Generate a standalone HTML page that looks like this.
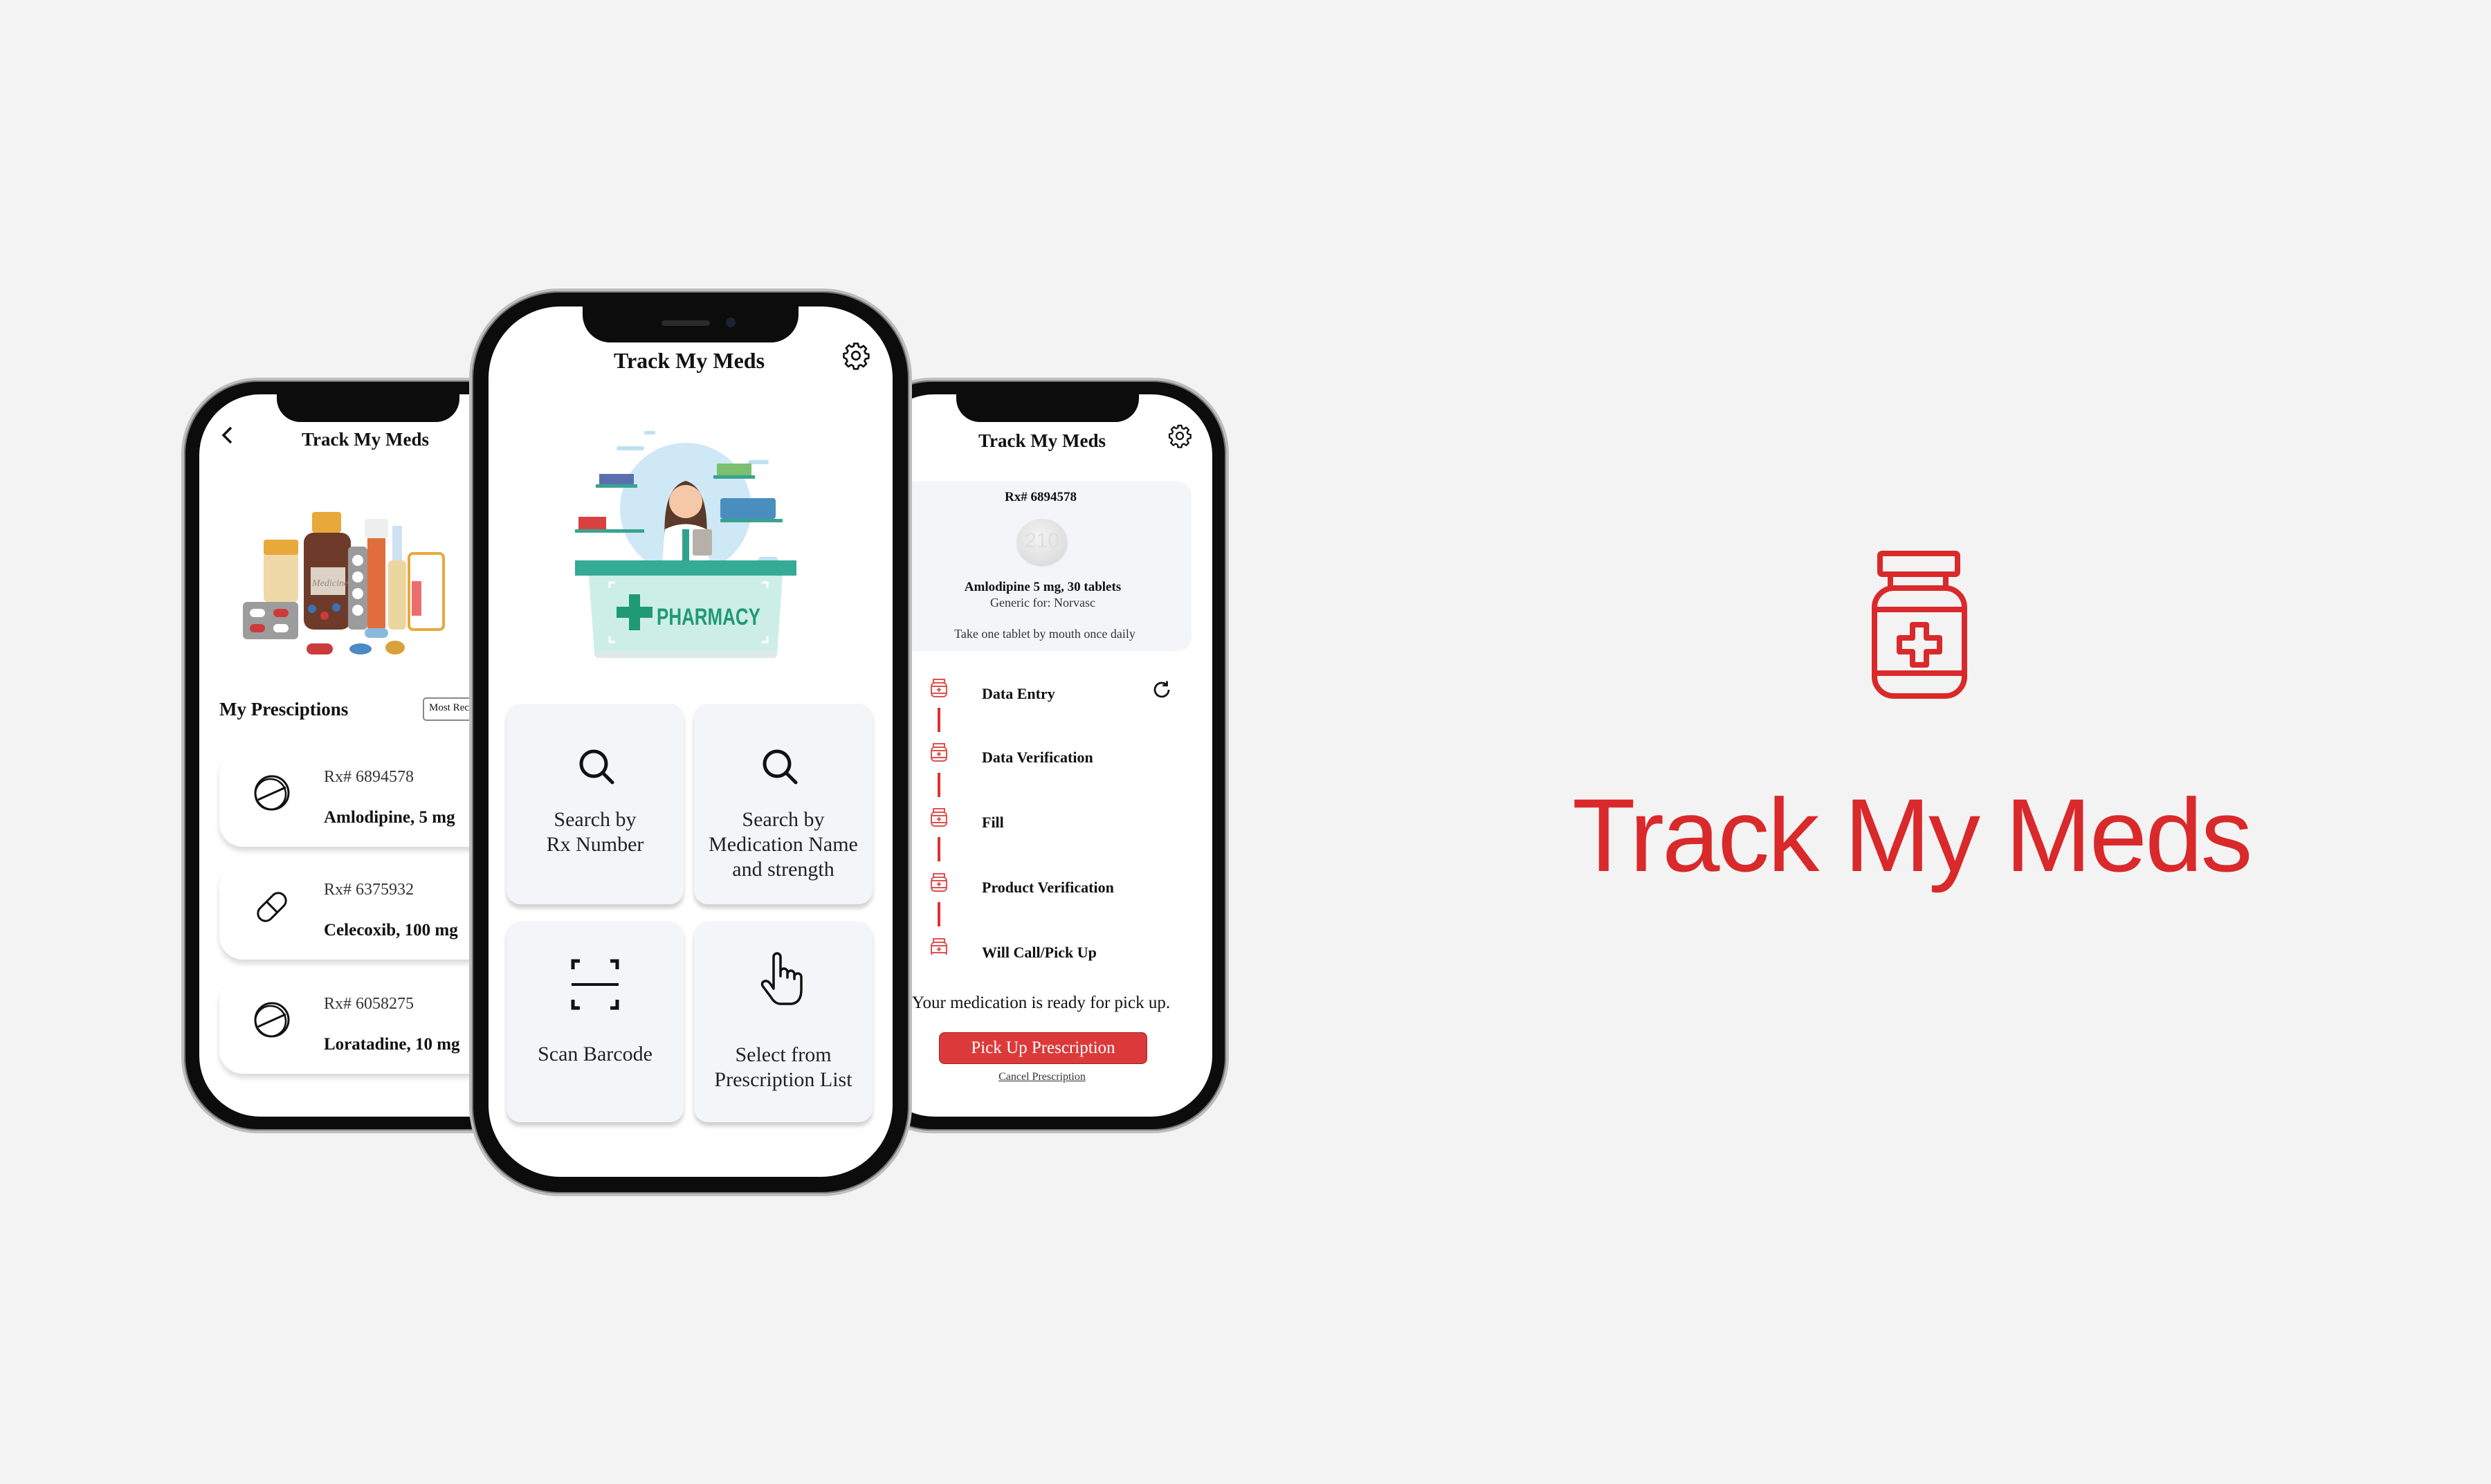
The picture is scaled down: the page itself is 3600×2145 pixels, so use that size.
<!DOCTYPE html>
<html><head><meta charset="utf-8"><style>
*{margin:0;padding:0;box-sizing:border-box}
body{width:3600px;height:2145px;background:#f3f3f3;position:relative;overflow:hidden;font-family:"Liberation Serif",serif;color:#111}
.abs{position:absolute}
.phone{position:absolute;background:#0c0c0c;border:4px solid #bdbdbd;box-shadow:0 0 0 2px #777 inset}
.screen{position:absolute;background:#fff;overflow:hidden}
.notch{position:absolute;background:#0c0c0c;border-radius:0 0 34px 34px}
.t{position:absolute;white-space:nowrap}
.c{transform:translateX(-50%);text-align:center}
.card{position:absolute;background:#f4f5f8;border-radius:20px;box-shadow:0 6px 6px rgba(0,0,0,.18)}
.lcard{position:absolute;background:#fff;border-radius:34px;box-shadow:0 6px 8px rgba(0,0,0,.15)}
</style></head><body>

<!-- LEFT PHONE -->
<div class="phone" style="left:262px;top:546px;width:540px;height:1092px;border-radius:110px"></div>
<div class="screen" style="left:288px;top:570px;width:500px;height:1044px;border-radius:88px">
  <div class="notch" style="left:112px;top:0;width:264px;height:40px"></div>
  <svg class="abs" style="left:26px;top:44px" width="30" height="30" viewBox="0 0 30 30"><path d="M20 4 L9 15 L20 26" fill="none" stroke="#111" stroke-width="3.5"/></svg>
  <div class="t c" style="left:240px;top:50px;font-size:27px;font-weight:bold">Track My Meds</div>
  <svg class="abs" style="left:63px;top:160px" width="440" height="220" viewBox="0 0 440 220">
    <rect x="30" y="60" width="50" height="80" rx="6" fill="#f0d9a8"/><rect x="30" y="50" width="50" height="22" rx="4" fill="#e8a83a"/>
    <rect x="100" y="10" width="42" height="30" rx="4" fill="#e8a83a"/>
    <rect x="88" y="40" width="68" height="140" rx="14" fill="#6e3b2a"/>
    <rect x="98" y="90" width="50" height="40" fill="#ddd2c6"/><text x="100" y="117" font-size="14" font-style="italic" fill="#9a8a80">Medicine</text>
    <circle cx="100" cy="150" r="6" fill="#3a72b8"/><circle cx="118" cy="160" r="6" fill="#cc3b3b"/><circle cx="135" cy="148" r="6" fill="#3a72b8"/>
    <rect x="152" y="60" width="28" height="120" rx="6" fill="#9b9b9b"/>
    <circle cx="166" cy="80" r="8" fill="#fff"/><circle cx="166" cy="104" r="8" fill="#fff"/><circle cx="166" cy="128" r="8" fill="#fff"/><circle cx="166" cy="152" r="8" fill="#fff"/>
    <rect x="180" y="40" width="26" height="140" rx="4" fill="#e06d3a"/><rect x="176" y="20" width="34" height="28" rx="4" fill="#eee"/>
    <rect x="210" y="80" width="26" height="100" rx="6" fill="#ecd6a0"/><rect x="216" y="30" width="14" height="50" fill="#cfe1f2"/>
    <rect x="240" y="70" width="50" height="110" rx="6" fill="#fff" stroke="#e8a83a" stroke-width="4"/><rect x="244" y="110" width="14" height="50" fill="#ea6e6e"/>
    <rect x="0" y="140" width="80" height="54" rx="6" fill="#9c9c9c"/>
    <rect x="10" y="150" width="22" height="12" rx="6" fill="#fff"/><rect x="44" y="150" width="22" height="12" rx="6" fill="#cc3b3b"/><rect x="10" y="172" width="22" height="12" rx="6" fill="#cc3b3b"/><rect x="44" y="172" width="22" height="12" rx="6" fill="#fff"/>
    <rect x="92" y="200" width="38" height="16" rx="8" fill="#cc3b3b"/><ellipse cx="170" cy="208" rx="16" ry="8" fill="#4b8ac4"/><ellipse cx="220" cy="206" rx="14" ry="10" fill="#d9a13a"/><rect x="176" y="178" width="34" height="14" rx="7" fill="#8bb8df"/>
  </svg>
  <div class="t" style="left:29px;top:440px;font-size:27px;font-weight:bold">My Presciptions</div>
  <div class="abs" style="left:323px;top:438px;width:200px;height:34px;border:2px solid #888;border-radius:5px;font-size:15px;padding:5px 7px">Most Recent</div>
  <div class="lcard" style="left:29px;top:516px;width:520px;height:138px"></div>
  <div class="lcard" style="left:29px;top:679px;width:520px;height:138px"></div>
  <div class="lcard" style="left:29px;top:844px;width:520px;height:138px"></div>
  <svg class="abs" style="left:77px;top:548px" width="56" height="56" viewBox="0 0 56 56"><circle cx="28" cy="28" r="24" fill="none" stroke="#111" stroke-width="3"/><circle cx="26" cy="30" r="22" fill="none" stroke="#111" stroke-width="2.5"/><path d="M8 38 L48 20" stroke="#111" stroke-width="3"/></svg>
  <svg class="abs" style="left:77px;top:713px" width="56" height="56" viewBox="0 0 56 56"><g transform="rotate(-45 28 28)"><rect x="4" y="17" width="48" height="22" rx="11" fill="none" stroke="#111" stroke-width="3"/><path d="M28 17 V39" stroke="#111" stroke-width="3"/></g></svg>
  <svg class="abs" style="left:77px;top:876px" width="56" height="56" viewBox="0 0 56 56"><circle cx="28" cy="28" r="24" fill="none" stroke="#111" stroke-width="3"/><circle cx="26" cy="30" r="22" fill="none" stroke="#111" stroke-width="2.5"/><path d="M8 38 L48 20" stroke="#111" stroke-width="3"/></svg>
  <div class="t" style="left:180px;top:540px;font-size:24px;color:#333">Rx# 6894578</div>
  <div class="t" style="left:180px;top:598px;font-size:25px;font-weight:bold">Amlodipine, 5 mg</div>
  <div class="t" style="left:180px;top:703px;font-size:24px;color:#333">Rx# 6375932</div>
  <div class="t" style="left:180px;top:761px;font-size:25px;font-weight:bold">Celecoxib, 100 mg</div>
  <div class="t" style="left:180px;top:868px;font-size:24px;color:#333">Rx# 6058275</div>
  <div class="t" style="left:180px;top:926px;font-size:25px;font-weight:bold">Loratadine, 10 mg</div>
</div>

<!-- RIGHT PHONE -->
<div class="phone" style="left:1236px;top:546px;width:540px;height:1092px;border-radius:110px"></div>
<div class="screen" style="left:1262px;top:570px;width:490px;height:1044px;border-radius:88px">
  <div class="notch" style="left:120px;top:0;width:264px;height:40px"></div>
  <div class="t c" style="left:244px;top:52px;font-size:27px;font-weight:bold">Track My Meds</div>
  <svg class="abs" style="left:425px;top:42px" width="36" height="36" viewBox="0 0 24 24"><path d="M10.3 2h3.4l.5 2.6 1.8.8 2.2-1.5 2.4 2.4-1.5 2.2.8 1.8 2.6.5v3.4l-2.6.5-.8 1.8 1.5 2.2-2.4 2.4-2.2-1.5-1.8.8-.5 2.6h-3.4l-.5-2.6-1.8-.8-2.2 1.5-2.4-2.4 1.5-2.2-.8-1.8L2 13.7v-3.4l2.6-.5.8-1.8-1.5-2.2 2.4-2.4 2.2 1.5 1.8-.8z" fill="none" stroke="#111" stroke-width="1.5" stroke-linejoin="round"/><circle cx="12" cy="12" r="3.3" fill="none" stroke="#111" stroke-width="1.5"/></svg>
  <div class="abs" style="left:0;top:126px;width:460px;height:245px;background:#f4f5f8;border-radius:0 20px 20px 0"></div>
  <div class="t c" style="left:242px;top:138px;font-size:19px;font-weight:bold">Rx# 6894578</div>
  <div class="abs" style="left:208px;top:180px;width:72px;height:66px;border-radius:50%;background:radial-gradient(circle at 45% 40%,#f3f3f3,#d6d6d6);box-shadow:0 2px 3px rgba(0,0,0,.15)"></div>
  <div class="t c" style="left:244px;top:195px;font-size:30px;color:#dedede;font-family:'Liberation Sans',sans-serif">210</div>
  <div class="t c" style="left:245px;top:268px;font-size:19px;font-weight:bold">Amlodipine 5 mg, 30 tablets</div>
  <div class="t c" style="left:245px;top:291px;font-size:18px;color:#333">Generic for: Norvasc</div>
  <div class="t c" style="left:248px;top:336px;font-size:18px;color:#333">Take one tablet by mouth once daily</div>
  <svg class="abs" style="left:80px;top:410px" width="30" height="400" viewBox="0 0 30 400">
    <g fill="none" stroke="#e05050" stroke-width="2">
      <g id="b"><rect x="7" y="2" width="16" height="5"/><rect x="4" y="7" width="22" height="20" rx="5"/><path d="M4 12H26M4 22H26M15 14v6M12 17h6"/></g>
      <use href="#b" y="93"/><use href="#b" y="187"/><use href="#b" y="281"/><use href="#b" y="375"/>
    </g>
    <g stroke="#e03030" stroke-width="4"><path d="M15 43V78M15 137V172M15 230V265M15 324V359"/></g>
  </svg>
  <div class="t" style="left:157px;top:420px;font-size:22px;font-weight:bold">Data Entry</div>
  <div class="t" style="left:157px;top:512px;font-size:22px;font-weight:bold">Data Verification</div>
  <div class="t" style="left:157px;top:606px;font-size:22px;font-weight:bold">Fill</div>
  <div class="t" style="left:157px;top:700px;font-size:22px;font-weight:bold">Product Verification</div>
  <div class="t" style="left:157px;top:794px;font-size:22px;font-weight:bold">Will Call/Pick Up</div>
  <svg class="abs" style="left:402px;top:412px" width="30" height="30" viewBox="0 0 24 24"><path d="M20 12a8 8 0 1 1-2.6-5.9" fill="none" stroke="#111" stroke-width="2.2"/><path d="M18 2v5h-5" fill="none" stroke="#111" stroke-width="2.2"/></svg>
  <div class="t" style="left:56px;top:866px;font-size:25px;color:#111">Your medication is ready for pick up.</div>
  <div class="abs" style="left:95px;top:922px;width:301px;height:46px;background:#dc3a3a;border:1px solid #a02020;border-radius:8px;color:#fff;font-size:25px;text-align:center;line-height:44px">Pick Up Prescription</div>
  <div class="t c" style="left:244px;top:978px;font-size:16px;text-decoration:underline;color:#333">Cancel Prescription</div>
</div>

<!-- CENTER PHONE -->
<div class="phone" style="left:678px;top:417px;width:640px;height:1312px;border-radius:130px"></div>
<div class="screen" style="left:706px;top:443px;width:584px;height:1258px;border-radius:104px">
  <div class="notch" style="left:136px;top:0;width:312px;height:52px;border-radius:0 0 40px 40px"></div>
  <div class="abs" style="left:250px;top:20px;width:70px;height:8px;border-radius:4px;background:#2a2a2a"></div>
  <div class="abs" style="left:343px;top:16px;width:14px;height:14px;border-radius:50%;background:#1a2233"></div>
  <div class="t c" style="left:290px;top:60px;font-size:32px;font-weight:bold">Track My Meds</div>
  <svg class="abs" style="left:510px;top:50px" width="42" height="42" viewBox="0 0 24 24"><path d="M10.3 2h3.4l.5 2.6 1.8.8 2.2-1.5 2.4 2.4-1.5 2.2.8 1.8 2.6.5v3.4l-2.6.5-.8 1.8 1.5 2.2-2.4 2.4-2.2-1.5-1.8.8-.5 2.6h-3.4l-.5-2.6-1.8-.8-2.2 1.5-2.4-2.4 1.5-2.2-.8-1.8L2 13.7v-3.4l2.6-.5.8-1.8-1.5-2.2 2.4-2.4 2.2 1.5 1.8-.8z" fill="none" stroke="#111" stroke-width="1.5" stroke-linejoin="round"/><circle cx="12" cy="12" r="3.3" fill="none" stroke="#111" stroke-width="1.5"/></svg>
  <svg class="abs" style="left:125px;top:172px" width="330" height="340" viewBox="0 0 330 340">
    <circle cx="160" cy="120" r="95" fill="#cfe8f6"/>
    <rect x="100" y="8" width="16" height="5" rx="2" fill="#bfe0f2"/><rect x="60" y="30" width="40" height="6" rx="3" fill="#bfe0f2"/><rect x="250" y="50" width="30" height="6" rx="3" fill="#bfe0f2"/><rect x="265" y="190" width="28" height="8" rx="4" fill="#bfe0f2"/>
    <rect x="30" y="85" width="60" height="5" fill="#3aa38f"/><rect x="35" y="70" width="50" height="15" fill="#5a6fb0"/>
    <rect x="200" y="72" width="60" height="5" fill="#3aa38f"/><rect x="205" y="55" width="50" height="17" fill="#7ac070"/>
    <rect x="0" y="150" width="100" height="5" fill="#3aa38f"/><rect x="5" y="132" width="40" height="18" fill="#d94040"/>
    <rect x="210" y="105" width="80" height="30" rx="4" fill="#4a8ec0"/><rect x="210" y="135" width="90" height="5" fill="#3aa38f"/>
    <path d="M130 170 Q125 90 160 80 Q195 90 190 170 Z" fill="#5a3a2a"/>
    <circle cx="160" cy="110" r="24" fill="#f5c9a8"/>
    <path d="M125 210 L130 150 Q160 135 190 150 L195 210 Z" fill="#fff"/>
    <rect x="155" y="150" width="10" height="60" fill="#2fa38a"/>
    <rect x="170" y="150" width="28" height="38" rx="3" fill="#b7b0a8"/>
    <rect x="0" y="195" width="320" height="22" fill="#35aa94"/>
    <path d="M20 217 H300 L292 330 H28 Z" fill="#cdeee6"/>
    <rect x="28" y="326" width="264" height="10" rx="5" fill="#dde9e6"/>
    <path d="M50 235 v-8 h8 M270 227 h8 v8 M50 305 v8 h8 M270 313 h8 v-8" fill="none" stroke="#fff" stroke-width="3"/>
    <path d="M60 262 h18 v-18 h16 v18 h18 v16 h-18 v18 h-16 v-18 h-18 z" fill="#1f9a72"/>
    <text x="118" y="288" font-family="Liberation Sans,sans-serif" font-weight="bold" font-size="34" fill="#1f9a72" textLength="150" lengthAdjust="spacingAndGlyphs">PHARMACY</text>
  </svg>
  <div class="card" style="left:26px;top:574px;width:256px;height:290px"></div>
  <div class="card" style="left:297px;top:574px;width:258px;height:290px"></div>
  <div class="card" style="left:26px;top:889px;width:256px;height:290px"></div>
  <div class="card" style="left:297px;top:889px;width:258px;height:290px"></div>
  <svg class="abs" style="left:127px;top:636px" width="60" height="60" viewBox="0 0 60 60"><circle cx="25" cy="25" r="18" fill="none" stroke="#111" stroke-width="5"/><path d="M38 38 L52 52" stroke="#111" stroke-width="5" stroke-linecap="round"/></svg>
  <svg class="abs" style="left:392px;top:636px" width="60" height="60" viewBox="0 0 60 60"><circle cx="25" cy="25" r="18" fill="none" stroke="#111" stroke-width="5"/><path d="M38 38 L52 52" stroke="#111" stroke-width="5" stroke-linecap="round"/></svg>
  <div class="t c" style="left:154px;top:724px;font-size:30px;line-height:36px;color:#222">Search by<br>Rx Number</div>
  <div class="t c" style="left:426px;top:724px;font-size:30px;line-height:36px;color:#222">Search by<br>Medication Name<br>and strength</div>
  <svg class="abs" style="left:118px;top:940px" width="72" height="80" viewBox="0 0 72 80"><path d="M4 18 V6 H14 M58 6 H68 V18 M4 62 V74 H14 M58 74 H68 V62" fill="none" stroke="#111" stroke-width="5"/><path d="M2 40 H70" stroke="#111" stroke-width="4"/></svg>
  <svg class="abs" style="left:392px;top:930px" width="64" height="84" viewBox="0 0 64 84"><path d="M20 44 V10 a5 5 0 0 1 10 0 V38 V32 a5 5 0 0 1 10 0 V40 V35 a5 5 0 0 1 10 0 V42 V39 a5 5 0 0 1 10 0 V58 Q60 76 46 78 H30 Q22 78 16 68 L4 52 Q2 46 8 45 Q12 44 16 50 L20 56 Z" fill="none" stroke="#111" stroke-width="3.5" stroke-linejoin="round"/></svg>
  <div class="t c" style="left:154px;top:1064px;font-size:30px;color:#222">Scan Barcode</div>
  <div class="t c" style="left:426px;top:1064px;font-size:30px;line-height:36px;color:#222">Select from<br>Prescription List</div>
</div>

<!-- LOGO -->
<svg class="abs" style="left:2690px;top:785px" width="170" height="240" viewBox="0 0 170 240">
  <g fill="none" stroke="#d9292b" stroke-width="8" stroke-linejoin="round">
    <rect x="27" y="15" width="112" height="30" rx="3"/>
    <path d="M42 45 V65 M122 45 V65"/>
    <rect x="19" y="65" width="130" height="156" rx="28"/>
    <path d="M19 96 H149 M19 188 H149"/>
    <path d="M74 118 h20 v19 h19 v20 h-19 v19 h-20 v-19 h-19 v-20 h19 z"/>
  </g>
</svg>
<div class="t" style="left:2272px;top:1132px;font-family:'Liberation Sans',sans-serif;font-size:150px;color:#d9292b;letter-spacing:-3px;line-height:1">Track My Meds</div>

</body></html>
